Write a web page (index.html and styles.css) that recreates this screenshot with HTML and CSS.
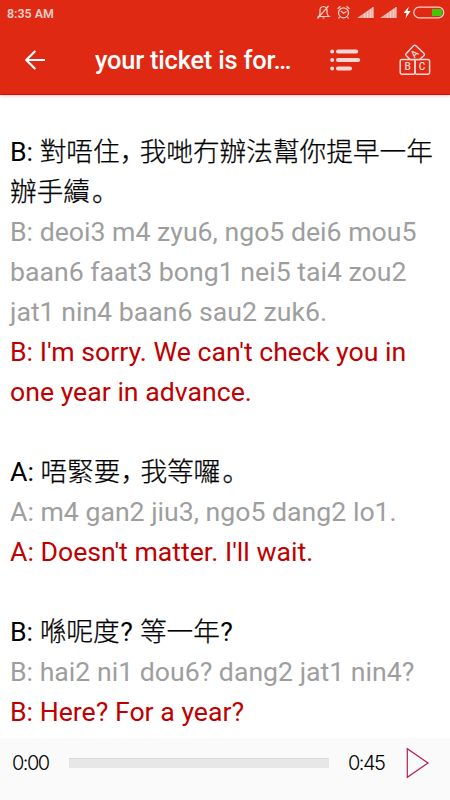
FILE: index.html
```
<!DOCTYPE html>
<html lang="zh-Hant">
<head>
<meta charset="utf-8">
<title>your ticket is for…</title>
<link rel="stylesheet" href="styles.css">
</head>
<body>
<header class="top">
  <div class="status">
    <span class="clock">8:35 AM</span>
    <svg class="status-icons" width="134" height="26" viewBox="-5 0 134 26" fill="none" stroke="#f9cfca" stroke-width="1.2">
      <g transform="translate(-5 0)">
        <path d="M3.500 16.500h10.500q-2-1.500-2-4V10q0-3-3.500-3.500Q5 7 5 10v2.500q0 2.500-1.500 4zM7.500 18h2M2.500 18.500L13.500 6"/>
        <circle cx="28.500" cy="12.800" r="5"/><path d="M25.800 11l2.700 2.300 3-1.800M22.500 8.800l3-2.500M31.500 6.300l3 2.500M24.500 17l-1 1.500M32.500 17l1 1.500"/>
        <path fill="#f3aaa1" stroke="none" d="M42 18L58 7v11zM65 18L81 7v11z"/>
        <path d="M49.500 18v-4.500M52.500 18v-7M55.500 18V9M58 18V7M72.500 18v-4.500M75.500 18v-7M78.500 18V9M81 18V7"/>
      </g>
      <path fill="#fff" stroke="none" d="M89 6.500l-5.500 6.500h3L85.500 18.500l5-7.500h-3z"/>
      <path fill="#45c308" stroke="none" d="M112 9h8q2.500 0 2.500 3.500t-2.500 3.500h-8z"/>
      <rect x="93.800" y="7.200" width="30" height="10.600" rx="5.300"/>
    </svg>
  </div>
  <div class="bar">
    <svg class="back" width="22" height="22" viewBox="0 0 22 22" fill="none" stroke="#fff" stroke-width="2.200"><path d="M20 11H2M10.300 2L1.300 11l9 9"/></svg>
    <h1 class="title">your ticket is for…</h1>
    <svg class="list" width="32" height="24" viewBox="0 0 32 24" fill="none" stroke="#fbd8d4" stroke-width="4" stroke-linecap="round"><path d="M2.200 3.500h0M8 3.500h18.200M2.200 12h0M8 12h20.200M2.200 20.500h0M8 20.500h12"/></svg>
    <svg class="blocks" width="32" height="32" viewBox="0 0 32 32" fill="none" stroke="#fbd8d4" stroke-width="1.500" stroke-linejoin="round">
      <rect x="1.200" y="15.500" width="14.800" height="14.700" rx="1.600"/><rect x="16" y="15.500" width="14.600" height="14.700" rx="1.600"/>
      <path fill="#df2912" d="M14.500 1.800q1.200-1.100 2.400 0l7.900 7.500q1.200 1.200 0 2.400L20.500 15.500H11.200L7.300 11.800q-1.100-1.200 0-2.400z"/>
      <g stroke="none" fill="#fbd8d4" class="letters"><text x="5.600" y="26.200">B</text><text x="19.800" y="26.200">C</text><text x="12.500" y="13" transform="rotate(-45 15.800 10)">A</text></g>
    </svg>
  </div>
</header>
<main class="dialog">
  <section class="turn">
    <p class="han">B: <span class="zh">對唔住</span><span class="comma" lang="zh-Hans">，</span><span class="zh">我哋冇辦法幫你提早一年</span><br><span class="zh">辦手續</span><span class="stop" lang="zh-Hans">。</span></p>
    <p class="roman">B: deoi3 m4 zyu6, ngo5 dei6 mou5<br>baan6 faat3 bong1 nei5 tai4 zou2<br>jat1 nin4 baan6 sau2 zuk6.</p>
    <p class="english">B: I'm sorry. We can't check you in<br>one year in advance.</p>
  </section>
  <section class="turn">
    <p class="han">A: <span class="zh">唔緊要</span><span class="comma" lang="zh-Hans">，</span><span class="zh">我等囉</span><span class="stop" lang="zh-Hans">。</span></p>
    <p class="roman">A: m4 gan2 jiu3, ngo5 dang2 lo1.</p>
    <p class="english">A: Doesn't matter. I'll wait.</p>
  </section>
  <section class="turn">
    <p class="han">B: <span class="zh">喺呢度</span><span class="mark">?</span> <span class="zh">等一年</span><span class="mark">?</span></p>
    <p class="roman">B: hai2 ni1 dou6? dang2 jat1 nin4?</p>
    <p class="english">B: Here? For a year?</p>
  </section>
</main>
<footer class="player">
  <span class="time">0:00</span>
  <div class="track"></div>
  <span class="time total">0:45</span>
  <svg class="play" width="24" height="32" viewBox="0 0 24 32" fill="none" stroke="#b51f4f" stroke-width="1.200"><path d="M1.300 1.700v28.600L22 16z"/></svg>
</footer>
</body>
</html>
```
FILE: styles.css
```
* { box-sizing: border-box; }
body {
  margin: 0;
  width: 450px;
  height: 800px;
  overflow: hidden;
  display: flex;
  flex-direction: column;
  background: #fff;
  font-family: Roboto, "Noto Sans CJK TC", sans-serif;
}
.top {
  flex: none;
  height: 95px;
  background: #df2912;
  border-bottom: 1px solid #d90b04;
  box-shadow: 0 1px 3px rgba(0, 0, 0, .2);
  color: #fff;
}
.status {
  height: 26px;
  display: flex;
  align-items: center;
  justify-content: space-between;
  padding-left: 7px;
}
.clock { font-size: 12.4px; font-weight: 600; color: #f9cfca; }
.status-icons { margin-right: 1px; overflow: visible; }
.bar { height: 68px; display: flex; align-items: center; padding: 0 19px 0 25px; }
.title { margin: 0 0 0 48px; width: 200px; font-size: 25.4px; font-weight: 500; line-height: 68px; white-space: nowrap; letter-spacing: -.2px; }
.list { margin-left: 35px; }
.blocks { margin-left: auto; }
.letters { font: 500 10px Roboto, sans-serif; }
.dialog { flex: 1; min-height: 0; padding: 37px 0 0 10px; font-size: 26.67px; line-height: 40px; }
.turn { margin-bottom: 40px; }
.turn:last-child { margin-bottom: 0; }
.turn p { margin: 0; white-space: nowrap; }
.han { color: #000; }
.zh { font-family: "Noto Sans CJK TC", sans-serif; font-weight: 300; line-height: 1; -webkit-text-stroke: .25px #000; }
.comma, .stop { font-family: "Noto Sans CJK SC", sans-serif; font-weight: 300; line-height: 1; -webkit-text-stroke: .25px #000; }
.comma { font-feature-settings: "halt"; margin-right: 6.67px; }
.stop { margin-left: 2px; }
.mark { margin: 0 .5px; font-weight: 400; }
.roman { color: #9e9e9e; }
.english { color: #c00000; }
.player {
  flex: none;
  height: 62px;
  display: flex;
  align-items: center;
  padding: 0 19px 12px 12px;
  background: #fafafa;
}
.time { width: 57px; font: 300 20px Inter, sans-serif; color: #000; letter-spacing: -1.5px; }
.track { width: 260px; height: 10px; background: #e7e7e7; border-top: 1px solid #d8d8d8; }
.total { margin-left: 19px; }
.play { margin-left: 1px; }
```
